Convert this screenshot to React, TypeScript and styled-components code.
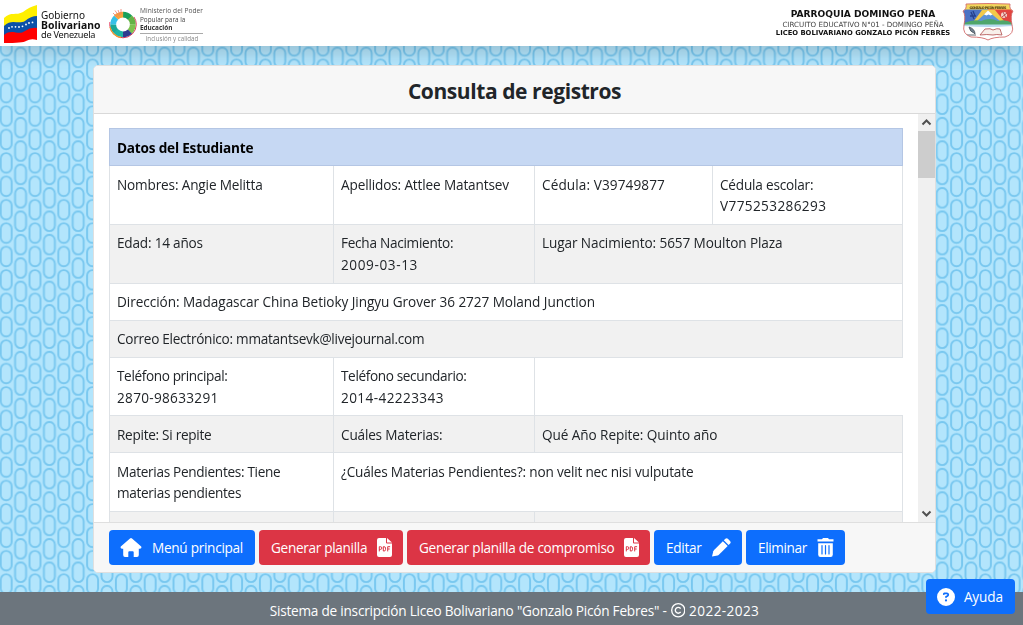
import React from "react";
import styled, { createGlobalStyle } from "styled-components";
import { FaCircleQuestion, FaRegCopyright, FaTrashCan } from "react-icons/fa6";

const Global = createGlobalStyle`
  *, *::before, *::after { box-sizing: border-box; }
  body { margin: 0; overflow: hidden; background: #b3e5fc; color: #212529;
    font-family: "Open Sans", "Noto Sans", sans-serif; font-size: 13.6px; line-height: 21.5px; }
`;

const Backdrop = styled.svg`
  position: fixed;
  inset: 0;
  z-index: -1;
  width: 100%;
  height: 100%;
`;

const Page = styled.div`
  display: flex;
  flex-direction: column;
  height: 625px;
`;

const Header = styled.header`
  display: flex;
  align-items: flex-start;
  justify-content: space-between;
  flex: none;
  height: 46px;
  background: #fff;
  box-shadow: 0 8px 16px rgba(0, 0, 0, 0.15);
`;

const Brand = styled.div`
  display: flex;
  padding: 4px 0 0 3px;
`;

const Government = styled.div`
  display: flex;
  flex-direction: column;
  width: 65px;
  margin: 7px 0 0 3px;
  font-family: "Noto Sans", sans-serif;
  color: #111;
`;

const Line = styled.span<{ $size: number; $lead: number; $track?: number; $bold?: boolean; $color?: string }>`
  font-size: ${(p) => p.$size}px;
  line-height: ${(p) => p.$lead}px;
  letter-spacing: ${(p) => p.$track ?? 0}px;
  font-weight: ${(p) => (p.$bold ? 700 : 400)};
  color: ${(p) => p.$color ?? "#111"};
  white-space: nowrap;
`;

const Ring = styled.svg`
  width: 30px;
  height: 32px;
  margin: 4px 0 0 2px;
`;

const Ministry = styled.div`
  display: flex;
  flex-direction: column;
  width: 64px;
  margin: 3px 0 0 2px;
  font-family: "Open Sans", sans-serif;
`;

const Rule = styled.div`
  height: 1px;
  margin: 1px 1px 0 0;
  background: #aaa;
`;

const Motto = styled.div`
  display: flex;
  justify-content: center;
`;

const School = styled.div`
  display: flex;
  padding: 3px 9px 0 0;
`;

const SchoolText = styled.div`
  display: flex;
  flex-direction: column;
  align-items: center;
  width: 176px;
  margin-right: 11px;
  padding-top: 5px;
  font-family: "DejaVu Sans", Verdana, sans-serif;
`;

const Card = styled.main`
  display: flex;
  flex-direction: column;
  flex: none;
  width: 843px;
  height: 508px;
  margin: 19px 0 19px 93px;
  border: 1px solid #dfdfdf;
  border-radius: 5px;
  background: #fff;
  overflow: hidden;
`;

const CardTitle = styled.h1`
  flex: none;
  height: 48px;
  margin: 0;
  padding-top: 1px;
  border-bottom: 1px solid #d9d9d9;
  background: #f7f7f7;
  text-align: center;
  font-size: 21px;
  line-height: 49px;
  font-weight: 700;
  letter-spacing: -0.42px;
`;

const CardBody = styled.div`
  display: flex;
  flex: 1;
  min-height: 0;
`;

const Content = styled.div`
  flex: 1;
  padding: 14px 15px 0;
  overflow: hidden;
`;

const Table = styled.table`
  width: 794px;
  border-collapse: collapse;
  table-layout: fixed;
`;

const HeadCell = styled.th`
  height: 37px;
  padding: 2px 7px 0;
  border: 1px solid #b4c6e4;
  background: #c6d8f3;
  color: #000;
  text-align: left;
  letter-spacing: -0.2px;
`;

const Row = styled.tr<{ $h: number; $striped?: boolean; $low?: boolean }>`
  height: ${(p) => p.$h}px;
  line-height: ${(p) => (p.$low ? 21 : 21.5)}px;
  > td {
    padding-top: ${(p) => (p.$low ? 8 : 7)}px;
    background: ${(p) => (p.$striped ? "#f1f1f1" : "transparent")};
  }
`;

const Cell = styled.td`
  padding: 7px 7px 0;
  border: 1px solid #dee2e6;
  vertical-align: top;
`;

const Track = styled.span<{ $v: number }>`
  display: block;
  letter-spacing: ${(p) => p.$v}px;
  white-space: nowrap;
`;

const Scrollbar = styled.div`
  display: flex;
  flex-direction: column;
  width: 17px;
  background: #f0f0f0;
`;

const Arrow = styled.svg`
  flex: none;
  width: 17px;
  height: 17px;
`;

const Thumb = styled.div`
  height: 47px;
  margin-bottom: auto;
  background: #cdcdcd;
`;

const Actions = styled.div`
  display: flex;
  flex: none;
  gap: 4px;
  height: 50px;
  padding: 7px 15px;
  border-top: 1px solid #dfdfdf;
  background: #f7f7f7;
`;

const Button = styled.button<{ $w: number; $red?: boolean }>`
  display: flex;
  align-items: center;
  justify-content: space-between;
  flex: none;
  width: ${(p) => p.$w}px;
  height: 35px;
  padding: 0 12px;
  border: 0;
  border-radius: 4px;
  background: ${(p) => (p.$red ? "#dc3545" : "#0d6efd")};
  color: #fff;
  font: inherit;
  svg { flex: none; }
  svg:first-child { margin-left: -1px; }
  svg:last-child { margin-right: -1px; }
`;

const Footer = styled.footer`
  display: flex;
  align-items: center;
  justify-content: center;
  flex: none;
  gap: 4px;
  height: 33px;
  padding: 4px 0 0 6px;
  background: #6c757d;
  color: #fff;
`;

const Help = styled.div`
  position: fixed;
  right: 8px;
  bottom: 11px;
`;

const PdfIcon = () => (
  <svg width="15" height="19" viewBox="0 0 15 19">
    <path d="M2 0h7v4.5a1 1 0 0 0 1 1h5V17a2 2 0 0 1-2 2H2a2 2 0 0 1-2-2V2a2 2 0 0 1 2-2z" fill="#fff" />
    <path d="M10 0l5 4.6h-5z" fill="#fff" />
    <path d="M2.3 13.4V8.7h1.2a1.3 1.3 0 0 1 0 2.7H2.3M6.3 8.7v4.3h.8q1.4 0 1.4-1.4v-1.5q0-1.4-1.4-1.4zM10.7 13.4V8.7h2.4M10.7 11h2" fill="none" stroke="#dc3545" strokeWidth="1" />
  </svg>
);

const HouseIcon = () => (
  <svg width="22" height="19" viewBox="0 0 22 19">
    <path d="M10 .4Q11 -.4 12 .4L21.2 8.6Q22 10.6 20 10.8H18.8V17Q18.8 19 17 19H13.7V14.2Q13.7 13.2 12.7 13.2H9.3Q8.3 13.2 8.3 14.2V19H5Q3.2 19 3.2 17V10.8H2Q0 10.6.8 8.6z" fill="#fff" />
  </svg>
);

const PencilIcon = () => (
  <svg width="19" height="19" viewBox="0 0 19 19" fill="#fff">
    <path d="M0 18.600L1.300 13.200Q1.500 12.500 2.100 11.900L10.900 3.200L15.700 8L6.900 16.700Q6.300 17.200 5.600 17.400Z" />
    <path d="M11.800 2.300L13.400.8Q14.600-.3 15.900.8L18 2.900Q19.300 4.200 18.100 5.500L16.600 7.100Z" />
  </svg>
);

const BinIcon = () => (
  <svg width="17" height="19" viewBox="0 0 17 19">
    <path d="M1.200 5.200H15.800V16.500Q15.800 19 13.500 19H3.500Q1.200 19 1.200 16.500Z" fill="#fff" />
    <path d="M.5 1.300H5L6 0H11L12 1.300H16.500V3.600H.5Z" fill="#fff" />
    <path d="M5 7.500V16M8.500 7.500V16M12 7.500V16" stroke="#0d6efd" strokeWidth="1.200" strokeLinecap="round" />
  </svg>
);

const Flag = () => (
  <svg width="35" height="40" viewBox="0 0 35 40">
    <path d="M1 14C8 7 13 12 20 8Q26 3 34 1V15Q28 14 23 19C15 25 9 19 1 27z" fill="#ffef00" />
    <path d="M1 22C9 14 15 21 22 17Q28 12 34 12V26Q28 24 23 28C15 33 9 27 1 33z" fill="#0b50a8" />
    <path d="M1 31C9 24 15 32 22 27Q28 23 34 24V36Q28 34 23 37Q20 39 1 39z" fill="#f00" />
    <g fill="#fff">
      <circle cx="6" cy="24" r=".9" /><circle cx="9" cy="22.8" r=".9" /><circle cx="12.5" cy="22.8" r=".9" /><circle cx="16" cy="23" r=".9" />
      <circle cx="19.5" cy="22.3" r=".9" /><circle cx="23" cy="20.5" r=".9" /><circle cx="26" cy="19" r=".9" /><circle cx="29.5" cy="18.4" r=".9" />
    </g>
  </svg>
);

const ringColors = ["#18a05a", "#63b345", "#7cc34f", "#2e3d8f", "#1eb5a6", "#18a896", "#35c0e8", "#f6a13a"];

const MinistryMark = () => (
  <Ring viewBox="0 0 30 32">
    <circle cx="15" cy="16.500" r="13.3" fill="none" stroke="#e5335a" strokeWidth="1" strokeDasharray="52 31" strokeDashoffset="8" />
    {ringColors.map((c, i) => (
      <circle key={c} cx="15" cy="16.500" r="9.8" fill="none" stroke={c} strokeWidth="5.8" pathLength="80" strokeDasharray="10.2 69.8" transform={`rotate(${i * 45 - 90} 15 16.5)`} />
    ))}
    <path d="M2 19A13 13 0 0 0 13 29.500" fill="none" stroke="#f39a2b" strokeWidth="1.3" />
    <path d="M5 5l4 4M7 2.500l3.5 5M10 2l2 5M13 1v5" stroke="#ee7a68" strokeWidth=".8" />
  </Ring>
);

const Crest = () => (
  <svg width="52" height="38" viewBox="0 0 52 38">
    <defs>
      <clipPath id="shield"><path d="M4 1Q26 0 48 1Q47 6 51 8Q48 12 50 22Q53 31 43 34Q31 34 26 37Q21 34 9 34Q0 31 2 22Q4 12 1 8Q5 6 4 1z" /></clipPath>
    </defs>
    <g clipPath="url(#shield)">
      <rect width="52" height="38" fill="#fff" />
      <path d="M0 6h26v17H0z" fill="#4b72c4" />
      <path d="M26 6h26v17H26z" fill="#e2453f" />
      <path d="M12 18L20 7h13l9 11z" fill="#f3c94a" />
      <path d="M15 18l11-10 12 10z" fill="#5f93d6" />
      <path d="M22 11.500l4-4 4.500 4-2 1-2-1-2 1z" fill="#fff" />
      <path d="M2 20q10-4 17-2q9-4 17 0q8-2 14 2v2H2z" fill="#4fa66b" />
      <path d="M2 21.500h48v1.500q-24 2-48 0z" fill="#b7d9ef" />
      <rect width="52" height="6.500" fill="#f3d75c" />
      <path d="M9 9l3 7M8 13h6M11 8l2 5" stroke="#27418c" strokeWidth="1.300" />
      <circle cx="42" cy="12" r="3" fill="#f4d4cc" /><path d="M40 14l5-4M41 9l3 6" stroke="#a33" strokeWidth=".8" />
      <path d="M7 24q1 5 5 6l1 1q0-5-6-7M5 32h9" fill="#748292" stroke="#4f5962" strokeWidth=".9" />
      <path d="M18 32l5-6q6-1 8 1q4-2 7-1l2 6q-6-1-9 0q-6-1-13 0z" fill="#f8efea" stroke="#b75d5d" strokeWidth=".9" />
    </g>
    <path d="M4 1Q26 0 48 1Q47 6 51 8Q48 12 50 22Q53 31 43 34Q31 34 26 37Q21 34 9 34Q0 31 2 22Q4 12 1 8Q5 6 4 1z" fill="none" stroke="#d36b6b" strokeWidth=".9" />
    <text x="26" y="5.600" textAnchor="middle" textLength="37" fontFamily="DejaVu Sans, sans-serif" fontWeight="700" fontSize="3.400" fill="#4d3b12">GONZALO PICÓN FEBRES</text>
  </svg>
);

const columns = [224, 201, 178, 190];

export default function App() {
  return (
    <>
      <Global />
      <Backdrop>
        <defs>
          <pattern id="links" x="-8.2" y="46.7" width="28.8" height="23.4" patternUnits="userSpaceOnUse">
            <g fill="#b3e5fc" stroke="#78c7ef" strokeWidth="1.9">
              <rect x="8.9" y="-10.6" width="11" height="19.7" rx="5.5" />
              <rect x="8.9" y="12.8" width="11" height="19.7" rx="5.5" />
              <rect x="-5.5" y="0.9" width="11" height="19.7" rx="5.5" />
              <rect x="23.3" y="0.9" width="11" height="19.7" rx="5.5" />
            </g>
          </pattern>
        </defs>
        <rect width="100%" height="100%" fill="url(#links)" />
      </Backdrop>
      <Page>
        <Header>
          <Brand>
            <Flag />
            <Government>
              <Line $size={10} $lead={9.5}>Gobierno</Line>
              <Line $size={10.4} $lead={9} $bold $track={0.05}>Bolivariano</Line>
              <Line $size={9.2} $lead={9} $track={-0.25}>de Venezuela</Line>
            </Government>
            <MinistryMark />
            <Ministry>
              <Line $size={6.6} $lead={8.6} $track={0.05} $color="#555">Ministerio del Poder</Line>
              <Line $size={6.4} $lead={8.6} $color="#444">Popular para la</Line>
              <Line $size={6.4} $lead={8} $bold $color="#333">Educación</Line>
              <Rule />
              <Motto><Line $size={6.2} $lead={9} $color="#888">Inclusión y calidad</Line></Motto>
            </Ministry>
          </Brand>
          <School>
            <SchoolText>
              <Line $size={9.1} $lead={12} $bold>PARROQUIA DOMINGO PEÑA</Line>
              <Line $size={7.1} $lead={9} $color="#444">CIRCUITO EDUCATIVO N°01 - DOMINGO PEÑA</Line>
              <Line $size={6.8} $lead={9.500} $bold>LICEO BOLIVARIANO GONZALO PICÓN FEBRES</Line>
            </SchoolText>
            <Crest />
          </School>
        </Header>
        <Card>
          <CardTitle>Consulta de registros</CardTitle>
          <CardBody>
            <Content>
              <Table>
                <colgroup>{columns.map((w, i) => <col key={i} style={{ width: w }} />)}</colgroup>
                <tbody>
                  <tr><HeadCell colSpan={4}>Datos del Estudiante</HeadCell></tr>
                  <Row $h={59} $low>
                    <Cell><Track $v={-0.15}>Nombres: Angie Melitta</Track></Cell>
                    <Cell><Track $v={-0.14}>Apellidos: Attlee Matantsev</Track></Cell>
                    <Cell><Track $v={0.1}>Cédula: V39749877</Track></Cell>
                    <Cell><Track $v={-0.2}>Cédula escolar:</Track><Track $v={0.38}>V775253286293</Track></Cell>
                  </Row>
                  <Row $h={59} $striped>
                    <Cell><Track $v={-0.2}>Edad: 14 años</Track></Cell>
                    <Cell><Track $v={-0.27}>Fecha Nacimiento:</Track><Track $v={0.6}>2009-03-13</Track></Cell>
                    <Cell colSpan={2}><Track $v={-0.1}>Lugar Nacimiento: 5657 Moulton Plaza</Track></Cell>
                  </Row>
                  <Row $h={37}>
                    <Cell colSpan={4}><Track $v={-0.06}>Dirección: Madagascar China Betioky Jingyu Grover 36 2727 Moland Junction</Track></Cell>
                  </Row>
                  <Row $h={37} $striped>
                    <Cell colSpan={4}><Track $v={-0.27}>Correo Electrónico: mmatantsevk@livejournal.com</Track></Cell>
                  </Row>
                  <Row $h={58}>
                    <Cell><Track $v={-0.37}>Teléfono principal:</Track><Track $v={0.3}>2870-98633291</Track></Cell>
                    <Cell><Track $v={-0.37}>Teléfono secundario:</Track><Track $v={0.4}>2014-42223343</Track></Cell>
                  </Row>
                  <Row $h={37} $striped $low>
                    <Cell><Track $v={-0.28}>Repite: Si repite</Track></Cell>
                    <Cell><Track $v={-0.18}>Cuáles Materias:</Track></Cell>
                    <Cell colSpan={2}><Track $v={-0.08}>Qué Año Repite: Quinto año</Track></Cell>
                  </Row>
                  <Row $h={59} $low>
                    <Cell><Track $v={-0.3}>Materias Pendientes: Tiene</Track><Track $v={-0.32}>materias pendientes</Track></Cell>
                    <Cell colSpan={3}><Track $v={-0.19}>¿Cuáles Materias Pendientes?: non velit nec nisi vulputate</Track></Cell>
                  </Row>
                  <Row $h={37} $striped><Cell /><Cell /><Cell colSpan={2} /></Row>
                </tbody>
              </Table>
            </Content>
            <Scrollbar>
              <Arrow viewBox="0 0 17 17"><path d="M4.500 10.500l4-4 4 4" fill="none" stroke="#505050" strokeWidth="2" /></Arrow>
              <Thumb />
              <Arrow viewBox="0 0 17 17"><path d="M4.500 6.500l4 4 4-4" fill="none" stroke="#505050" strokeWidth="2" /></Arrow>
            </Scrollbar>
          </CardBody>
          <Actions>
            <Button $w={146}><HouseIcon /><Track $v={-0.28}>Menú principal</Track></Button>
            <Button $w={144} $red><Track $v={-0.31}>Generar planilla</Track><PdfIcon /></Button>
            <Button $w={243} $red><Track $v={-0.29}>Generar planilla de compromiso</Track><PdfIcon /></Button>
            <Button $w={88}><Track $v={-0.3}>Editar</Track><PencilIcon /></Button>
            <Button $w={99}><Track $v={-0.37}>Eliminar</Track><BinIcon /></Button>
          </Actions>
        </Card>
        <Footer>
          <Track $v={-0.22}>Sistema de inscripción Liceo Bolivariano "Gonzalo Picón Febres" -</Track>
          <FaRegCopyright size={14.5} />
          <Track $v={0.4}>2022-2023</Track>
        </Footer>
      </Page>
      <Help><Button $w={89}><FaCircleQuestion size={18} /><Track $v={-0.1}>Ayuda</Track></Button></Help>
    </>
  );
}
